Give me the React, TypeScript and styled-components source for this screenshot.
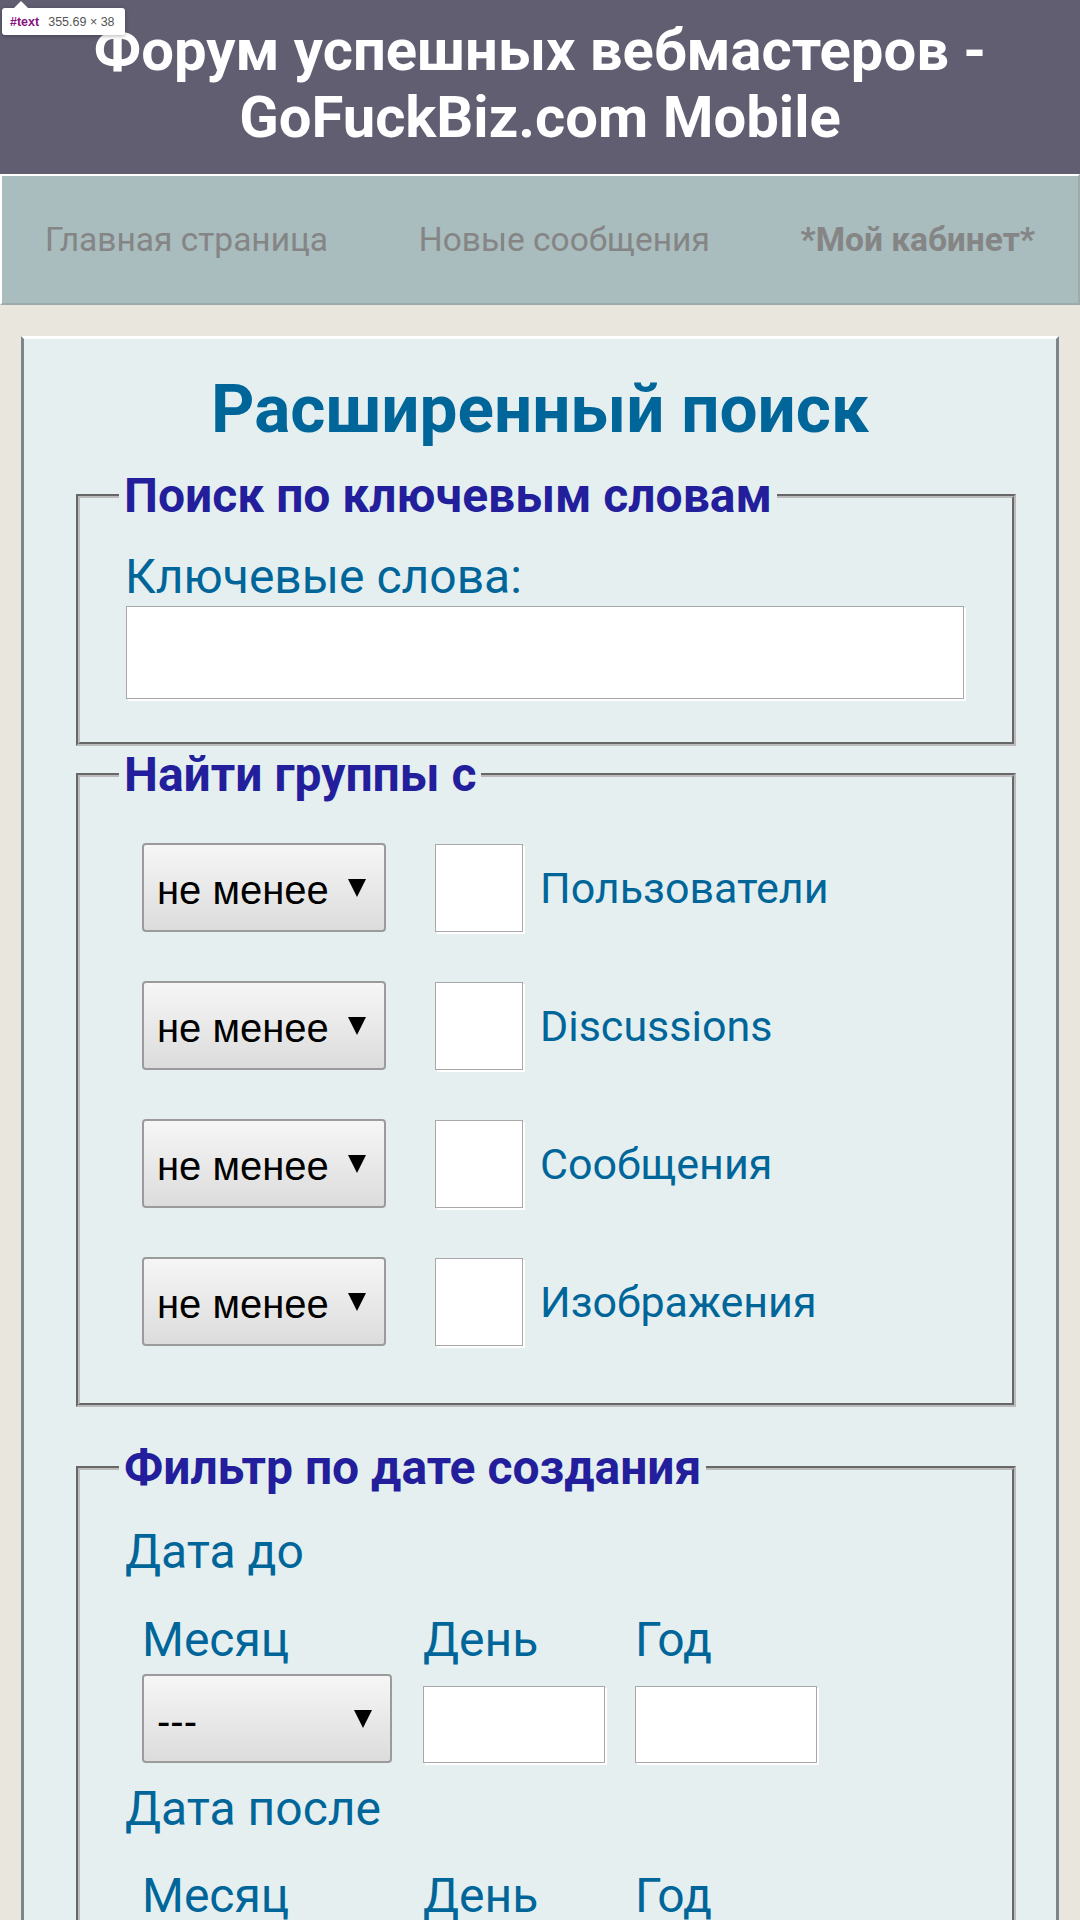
import React from 'react'
import styled, { createGlobalStyle } from 'styled-components'

const GlobalStyle = createGlobalStyle`
    body {
        margin: 0;
        background: #e9e7dd;
        font-family: Roboto, "Noto Sans", sans-serif;
    }
`;

const Page = styled.div`
    position: relative;
    min-height: 1920px;
`;

const DevTip = styled.div`
    position: absolute;
    top: 8px;
    left: 2px;
    width: 123px;
    height: 27px;
    box-sizing: border-box;
    padding: 0 0 0 8px;
    display: flex;
    align-items: center;
    gap: 9px;
    background: #fff;
    border-radius: 3px;
    box-shadow: 0 1px 4px rgba(0, 0, 0, 0.3);
    font: 12.5px "Liberation Sans", Arial, sans-serif;
    color: #555;
    white-space: nowrap;
    &::before {
        content: '';
        position: absolute;
        top: -7px;
        left: 12px;
        border-left: 7px solid transparent;
        border-right: 7px solid transparent;
        border-bottom: 7px solid #fff;
    }
    > b {
        color: #881280;
    }
`;

const Header = styled.h1`
    margin: 0;
    background: #625e72;
    color: #fff;
    font: 700 58px/67px Roboto, sans-serif;
    text-align: center;
    padding: 17px 20px 23px;
`;

const Nav = styled.nav`
    display: flex;
    justify-content: space-between;
    align-items: center;
    background: #a9bcbe;
    border: 2px solid #9dabac;
    border-top-color: #fff;
    border-left-color: #fff;
    padding: 44px 43px 43px;
`;

const NavLink = styled.a<{ $bold?: boolean }>`
    color: #858585;
    font-size: 33.5px;
    line-height: 40px;
    font-weight: ${({ $bold }) => ($bold ? 700 : 400)};
    text-decoration: none;
`;

const Panel = styled.main`
    margin: 31px 21px 0;
    background: #e6eff0;
    border: 3px solid #7b868a;
    border-top-color: #fff;
    padding: 0 40px 40px 52px;
`;

const PageTitle = styled.h2`
    margin: 30px 0 19px -12px;
    color: #00669a;
    font: 700 67.5px/80px Roboto, sans-serif;
    text-align: center;
`;

const Group = styled.fieldset<{ $mt?: number; $pb: number }>`
    margin: ${({ $mt }) => $mt || 0}px 0 0;
    padding: 0 40px ${({ $pb }) => $pb}px 39px;
    border: 4px groove #bbbbbb;
    min-width: 0;
`;

const Legend = styled.legend`
    padding: 0 5px;
    color: #221e9c;
    font: 700 48px/56px Roboto, sans-serif;
`;

const Label = styled.div<{ $mt: number }>`
    margin: ${({ $mt }) => $mt}px 0 0 6px;
    color: #00669a;
    font-size: 48px;
    line-height: 56px;
`;

const TextField = styled.input`
    display: block;
    box-sizing: border-box;
    margin: 1px 0 0 7px;
    width: 838px;
    height: 93px;
    border: 1px solid #a9a9a9;
    background: #fff;
    box-shadow: 2px 2px 0 #fff;
`;

const CountList = styled.div`
    display: flex;
    flex-direction: column;
    gap: 49px;
    margin: 40px 0 0 23px;
`;

const CountRow = styled.div`
    display: flex;
    align-items: center;
    height: 89px;
`;

const SelectWrap = styled.div<{ $w: number }>`
    position: relative;
    width: ${({ $w }) => $w}px;
    height: 89px;
    flex: none;
    &::after {
        content: '';
        position: absolute;
        right: 20px;
        top: 36px;
        border-left: 9px solid transparent;
        border-right: 9px solid transparent;
        border-top: 18px solid #000;
        pointer-events: none;
    }
`;

const Select = styled.select`
    appearance: none;
    box-sizing: border-box;
    width: 100%;
    height: 100%;
    margin: 0;
    padding: 4px 44px 0 13px;
    border: 2px solid #9b9b9b;
    border-radius: 4px;
    background: linear-gradient(#f6f6f6, #dcdcdc);
    color: #000;
    font: 40px "Liberation Sans", Arial, sans-serif;
`;

const SmallBox = styled.input<{ $w: number; $h: number; $ml?: number }>`
    box-sizing: border-box;
    width: ${({ $w }) => $w}px;
    height: ${({ $h }) => $h}px;
    margin: 0 0 0 ${({ $ml }) => $ml || 0}px;
    border: 1px solid #a9a9a9;
    background: #fff;
    box-shadow: 2px 2px 0 #fff;
    flex: none;
`;

const CountLabel = styled.span`
    margin-left: 17px;
    color: #00669a;
    font-size: 43px;
    line-height: 54px;
`;

const DateGrid = styled.div<{ $mt: number }>`
    display: grid;
    grid-template-columns: 250px 181px 181px;
    column-gap: 31px;
    row-gap: 6px;
    align-items: end;
    margin: ${({ $mt }) => $mt}px 0 0 23px;
`;

const DateHead = styled.span`
    color: #00669a;
    font-size: 48px;
    line-height: 56px;
`;

const counts = ['Пользователи', 'Discussions', 'Сообщения', 'Изображения'];

const DateFields = ({ mt }: { mt: number }) => (
    <DateGrid $mt={mt}>
        <DateHead>Месяц</DateHead>
        <DateHead>День</DateHead>
        <DateHead>Год</DateHead>
        <SelectWrap $w={250}>
            <Select defaultValue="">
                <option value="">---</option>
                <option>Январь</option>
                <option>Февраль</option>
                <option>Март</option>
            </Select>
        </SelectWrap>
        <SmallBox $w={182} $h={77} />
        <SmallBox $w={182} $h={77} />
    </DateGrid>
);

const App = (): JSX.Element => (
    <Page>
        <GlobalStyle />
        <Header>
            Форум успешных вебмастеров -<br />
            GoFuckBiz.com Mobile
        </Header>
        <DevTip>
            <b>#text</b>
            <span>355.69 × 38</span>
        </DevTip>
        <Nav>
            <NavLink href="#">Главная страница</NavLink>
            <NavLink href="#">Новые сообщения</NavLink>
            <NavLink href="#" $bold>*Мой кабинет*</NavLink>
        </Nav>
        <Panel>
            <PageTitle>Расширенный поиск</PageTitle>
            <Group $pb={43}>
                <Legend>Поиск по ключевым словам</Legend>
                <Label $mt={25}>Ключевые слова:</Label>
                <TextField type="text" />
            </Group>
            <Group $mt={1} $pb={57}>
                <Legend>Найти группы с</Legend>
                <CountList>
                    {counts.map((name) => (
                        <CountRow key={name}>
                            <SelectWrap $w={244}>
                                <Select defaultValue="min">
                                    <option value="min">не менее</option>
                                    <option value="max">не более</option>
                                </Select>
                            </SelectWrap>
                            <SmallBox $w={88} $h={88} $ml={49} />
                            <CountLabel>{name}</CountLabel>
                        </CountRow>
                    ))}
                </CountList>
            </Group>
            <Group $mt={33} $pb={40}>
                <Legend>Фильтр по дате создания</Legend>
                <Label $mt={28}>Дата до</Label>
                <DateFields mt={32} />
                <Label $mt={18}>Дата после</Label>
                <DateFields mt={31} />
            </Group>
        </Panel>
    </Page>
);

export default App
